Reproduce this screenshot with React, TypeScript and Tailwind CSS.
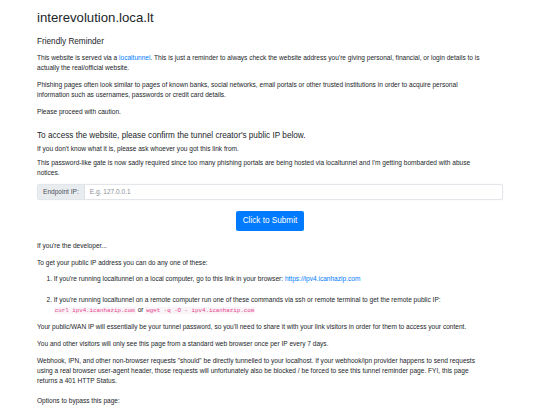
import React from "react";

const P = ({ className = "", children }: { className?: string; children: React.ReactNode }) => (
  <p className={`text-[6.57px] leading-[10.08px] ${className}`}>{children}</p>
);

const Code = ({ children }: { children: React.ReactNode }) => (
  <code className="font-['Liberation_Mono',monospace] text-[5.8px] text-[#e83e8c] bg-[#f9f4f7] px-[1px]">
    {children}
  </code>
);

export default function App() {
  return (
    <div className="min-h-[405px] w-full bg-white text-[#212529] font-['Liberation_Sans',Arial,sans-serif]">
      <div className="mx-auto w-[466px]">
        <h2 className="pt-[10px] text-[13.2px] leading-[16.13px]">interevolution.loca.lt</h2>
        <h5 className="mt-[11px] text-[8.2px] leading-[10.08px]">Friendly Reminder</h5>
        <P className="mt-[6px]">
          This website is served via a <a className="text-[#007bff]">localtunnel</a>. This is just a reminder to always
          check the website address you're giving personal, financial, or login details to is
          <br />
          actually the real/official website.
        </P>
        <P className="mt-[6.72px]">
          Phishing pages often look similar to pages of known banks, social networks, email portals or other trusted
          institutions in order to acquire personal
          <br />
          information such as usernames, passwords or credit card details.
        </P>
        <P className="mt-[6.72px]">Please proceed with caution.</P>
        <h5 className="mt-[14px] text-[8.2px] leading-[10.08px]">
          To access the website, please confirm the tunnel creator's public IP below.
        </h5>
        <P className="mt-[3px]">If you don't know what it is, please ask whoever you got this link from.</P>
        <P className="mt-[3.5px]">
          This password-like gate is now sadly required since too many phishing portals are being hosted via
          localtunnel and I'm getting bombarded with abuse
          <br />
          notices.
        </P>
        <div className="mt-[6.5px] flex h-[16px] rounded-[2px] border border-[#e2e5e9] shadow-[0_0_2px_rgba(0,0,0,0.05)]">
          <div className="flex items-center bg-[#e9ecef] px-[5px] text-[6.57px] text-[#495057] border-r border-[#dde1e5]">
            Endpoint IP:
          </div>
          <div className="flex flex-1 items-center px-[5px] text-[6.57px] text-[#8a9096]">E.g. 127.0.0.1</div>
        </div>
        <div className="mt-[10.5px] flex justify-center">
          <button className="h-[20px] rounded-[2px] bg-[#007bff] px-[7px] text-[8.2px] leading-[10.08px] text-white">
            Click to Submit
          </button>
        </div>
        <P className="mt-[10px]">If you're the developer...</P>
        <P className="mt-[6.72px]">To get your public IP address you can do any one of these:</P>
        <ol className="mt-[6.72px] list-decimal pl-[16.8px] text-[6.57px] leading-[10.08px]">
          <li>
            If you're running localtunnel on a local computer, go to this link in your browser:{" "}
            <a className="text-[#007bff]">https://ipv4.icanhazip.com</a>
            <br />
            <br />
          </li>
          <li>
            If you're running localtunnel on a remote computer run one of these commands via ssh or remote terminal to
            get the remote public IP:
            <br />
            <Code>curl ipv4.icanhazip.com</Code> or <Code>wget -q -O - ipv4.icanhazip.com</Code>
          </li>
        </ol>
        <P className="mt-[6.72px]">
          Your public/WAN IP will essentially be your tunnel password, so you'll need to share it with your link
          visitors in order for them to access your content.
        </P>
        <P className="mt-[6.72px]">
          You and other visitors will only see this page from a standard web browser once per IP every 7 days.
        </P>
        <P className="mt-[6.72px]">
          Webhook, IPN, and other non-browser requests "should" be directly tunnelled to your localhost. If your
          webhook/ipn provider happens to send requests
          <br />
          using a real browser user-agent header, those requests will unfortunately also be blocked / be forced to see
          this tunnel reminder page. FYI, this page
          <br />
          returns a 401 HTTP Status.
        </P>
        <P className="mt-[9.6px]">Options to bypass this page:</P>
      </div>
    </div>
  );
}
